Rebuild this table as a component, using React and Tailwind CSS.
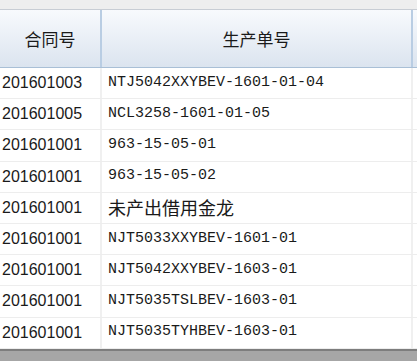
import React from "react";

const rows = [
  ["201601003", "NTJ5042XXYBEV-1601-01-04", false],
  ["201601005", "NCL3258-1601-01-05", false],
  ["201601001", "963-15-05-01", false],
  ["201601001", "963-15-05-02", false],
  ["201601001", "未产出借用金龙", true],
  ["201601001", "NJT5033XXYBEV-1601-01", false],
  ["201601001", "NJT5042XXYBEV-1603-01", false],
  ["201601001", "NJT5035TSLBEV-1603-01", false],
  ["201601001", "NJT5035TYHBEV-1603-01", false],
];

export default function App() {
  return (
    <div className="w-[417px] h-[361px] bg-white flex flex-col overflow-hidden text-[#1a1a1a]">
      <div className="h-[10px] bg-[#eeeeee] border-b border-[#c8cdd4] shrink-0" />
      <div className="h-[58px] shrink-0 flex bg-gradient-to-b from-[#f8fafd] to-[#dbe4ef] border-b border-[#a9bfd6] font-['Noto_Sans_CJK_SC',sans-serif] text-[17px]">
        <div className="w-[102px] flex items-center justify-center border-r-2 border-[#b9cde3]">合同号</div>
        <div className="w-[311px] flex items-center justify-center border-r-2 border-[#b9cde3]">生产单号</div>
        <div className="flex-1" />
      </div>
      {rows.map(([a, b, cjk], i) => (
        <div key={i} className="h-[31.2px] shrink-0 flex border-b border-[#ededed]">
          <div className="w-[102px] flex items-center pl-[2px] border-r-2 border-[#f0f0f0] font-['Liberation_Sans',sans-serif] text-[16px]">{a}</div>
          <div className={"w-[311px] flex items-center pl-[6px] border-r-2 border-[#f0f0f0] " + (cjk ? "font-['Noto_Sans_CJK_SC',sans-serif] text-[18px]" : "font-['Liberation_Mono',monospace] text-[15px]")}>{b}</div>
          <div className="flex-1" />
        </div>
      ))}
      <div className="flex-1 bg-[#a6a6a6] border-t-2 border-[#7d7d7d]" />
    </div>
  );
}
